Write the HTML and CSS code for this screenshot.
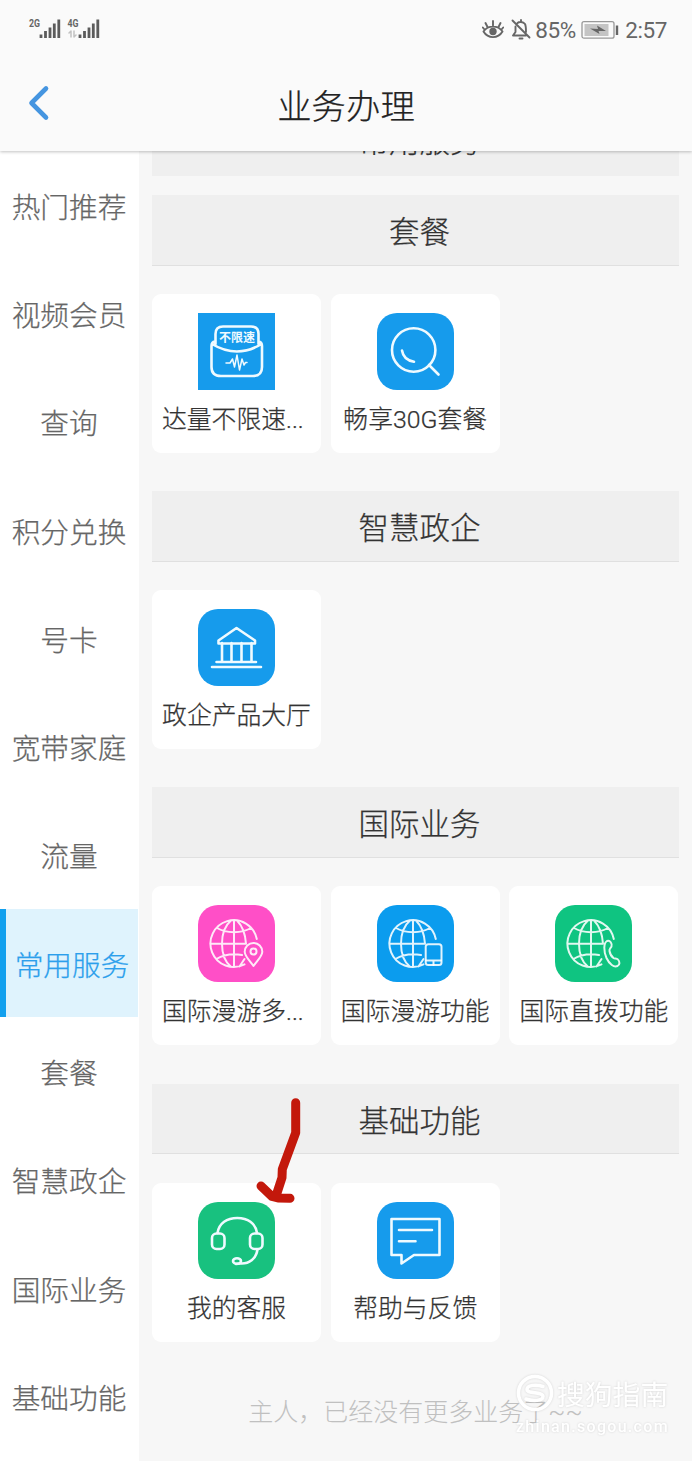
FILE: index.html
```
<!DOCTYPE html>
<html lang="zh-CN">
<head>
<meta charset="utf-8">
<title>业务办理</title>
<link rel="stylesheet" href="styles.css">
</head>
<body>
<svg class="defs" width="0" height="0">
  <symbol id="globe" viewBox="0 0 77 77">
    <path d="M58.8 34A23.4 23.4 0 1 0 46.5 59.4M36 15.3V62M12.6 38.7H48M33 15.5C26.500 21 24 29 24 38.7S26.500 56.500 33 61.8M39 15.5C44.500 21 47.3 29 48 38.7M46.5 54L41.5 61.5M19 23C28 28.500 44 28.500 53 23M18.500 54C26 49.500 35 48.500 44 50"/>
  </symbol>
</svg>
<div class="screen">
  <header class="top">
    <div class="status">
      <div class="signals">
        <svg width="74" height="24" viewBox="0 0 74 24">
          <g class="bars"><path d="M13 17.500v3.500M17.500 14v7M22 10.500v10.500M26.300 6.500v14.500M30.800 2.500v18.500M52 17.500v3.500M56.500 14v7M61 10.500v10.500M65.300 6.500v14.500M69.800 2.500v18.500"/></g>
          <path class="data" d="M43 20v-6l-2 2M46 14v6l2-2"/>
          <text x="1" y="10" textLength="11" lengthAdjust="spacingAndGlyphs">2G</text>
          <text x="39.500" y="10" textLength="11" lengthAdjust="spacingAndGlyphs">4G</text>
        </svg>
      </div>
      <div class="indicators">
        <svg class="eye" width="22" height="20" viewBox="0 0 22 20">
          <path d="M1.500 11.500C6 5 16 5 20.500 11.500C16 19 6 19 1.500 11.500ZM11 5.500V1M5.500 7L3.500 3M16.500 7L18.500 3M2.500 9.500L.8 7.500M19.500 9.500L21.200 7.500"/><circle cx="11" cy="11.500" r="3.700"/>
        </svg>
        <svg class="bell" width="20" height="21" viewBox="0 0 20 21">
          <path d="M4.500 7.500V13L2 16.500H15M6.500 4C8 2.500 12 2.500 14 5C15 7 15 10 15 13M10 3V1M1.500 1.500L18.500 18.500M8.500 19.500H11.500"/>
        </svg>
        <span class="percent">85%</span>
        <svg class="battery" width="38" height="20" viewBox="0 0 38 20">
          <rect class="shell" x="1" y="1.700" width="32" height="16.500" rx="2"/><rect class="level" x="3.500" y="4" width="24" height="12"/><path class="bolt" d="M9 8.500L17 9L16 5.500L25 11L17.500 11L18.500 14Z"/><rect class="cap" x="34.800" y="5.500" width="2.400" height="9.500"/>
        </svg>
        <span class="clock">2:57</span>
      </div>
    </div>
    <div class="titlebar">
      <svg class="back" width="22" height="36" viewBox="0 0 22 36"><path d="M18 3.500L3.500 18L18 32.500"/></svg>
      <h1>业务办理</h1>
    </div>
  </header>
  <div class="body">
    <nav class="side">
      <a>热门推荐</a><a>视频会员</a><a>查询</a><a>积分兑换</a><a>号卡</a><a>宽带家庭</a><a>流量</a><a class="active">常用服务</a><a>套餐</a><a>智慧政企</a><a>国际业务</a><a>基础功能</a>
    </nav>
    <main class="content">
      <h2 class="previous">常用服务</h2>
      <section>
        <h2>套餐</h2>
        <div class="cards">
          <div class="card">
            <svg class="icon square blue" viewBox="0 0 77 77"><path d="M17.500 31V21Q17.500 13.500 25 13.500H53Q60.500 13.500 60.500 21V31M17 28.500Q13.500 29 13.500 33V54Q13.500 63 23 63H55Q64 63 64 54V33Q64 29 60.500 28.500M14 31Q39 46 63.500 31"/><path class="thin" d="M28 50H32L34.500 46L36.500 54L39 42L41.500 57L44 46L46 52L47.500 49.500H49"/><text x="39" y="29" text-anchor="middle">不限速</text></svg>
            <span class="clipped">达量不限速...</span>
          </div>
          <div class="card">
            <svg class="icon blue" viewBox="0 0 77 77"><circle cx="36.700" cy="37" r="21.700"/><path d="M52 52L61.500 61.500M25 37.500Q26.500 47 37 48.700"/></svg>
            <span>畅享30G套餐</span>
          </div>
        </div>
      </section>
      <section>
        <h2>智慧政企</h2>
        <div class="cards">
          <div class="card">
            <svg class="icon blue" viewBox="0 0 77 77"><path d="M14 58H63M18.500 53H58M24 34V53M33.500 34V53M43.500 34V53M53.500 34V53M20.500 34.500H57V31.500L38.500 19L20.500 31.500Z"/></svg>
            <span>政企产品大厅</span>
          </div>
        </div>
      </section>
      <section>
        <h2>国际业务</h2>
        <div class="cards">
          <div class="card">
            <svg class="icon pink world" viewBox="0 0 77 77"><use href="#globe"/><path class="knock" d="M55.500 61C52 56 46.700 51 46.700 46.700A8.800 8.800 0 0 1 64.300 46.700C64.300 51 59 56 55.500 61Z"/><circle cx="55.500" cy="46.500" r="3"/></svg>
            <span class="clipped">国际漫游多...</span>
          </div>
          <div class="card">
            <svg class="icon sky world" viewBox="0 0 77 77"><use href="#globe"/><rect x="48.700" y="39.300" width="15.800" height="20.700" rx="2.500"/><path d="M49 55.500H64M56.500 56V60"/></svg>
            <span>国际漫游功能</span>
          </div>
          <div class="card">
            <svg class="icon jade world" viewBox="0 0 77 77"><use href="#globe"/><path d="M52 36C55 34.500 57.500 39 56.500 41.500C55.500 43.500 54 44 54.500 46C55 49 56.500 51.500 58.500 53C60 54 61.500 52.500 63 54.500C65 57 65 59.500 62.500 61C59 62.500 54.500 59.500 51.500 53C48.500 46 48.500 38 52 36Z"/></svg>
            <span>国际直拨功能</span>
          </div>
        </div>
      </section>
      <section>
        <h2>基础功能</h2>
        <div class="cards">
          <div class="card">
            <svg class="icon green" viewBox="0 0 77 77"><path d="M19.500 31C21 21 29 16 39.300 16S57.500 21 59 31M59.500 47.500C58 57 51 62 42.500 61.500L38 62"/><rect x="14" y="31.500" width="12.500" height="15.500" rx="4.500"/><rect x="52" y="31.500" width="12.500" height="15.500" rx="4.500"/><ellipse cx="39" cy="59" rx="4" ry="2.800"/></svg>
            <span>我的客服</span>
            <svg class="arrow" width="50" height="110" viewBox="0 0 50 110"><path d="M40.700 6.700V36.700L27.300 73.300L27 81.700L21 100M6 90L17 100.500L23 102L35 102.300"/></svg>
          </div>
          <div class="card">
            <svg class="icon blue" viewBox="0 0 77 77"><path d="M14.500 17H62.500V53H37L24.500 61.500V53H14.500ZM22 28H55M22 39.300H38.500"/></svg>
            <span>帮助与反馈</span>
          </div>
        </div>
      </section>
      <p class="end">主人，已经没有更多业务了~~</p>
    </main>
  </div>
  <div class="watermark">
    <div class="brand"><svg width="38" height="38" viewBox="0 0 38 38"><circle cx="19" cy="19" r="16.500"/><path d="M27 12.500C20 10 11 11 11 15.500C11 20 27 17.500 27 22.500C27 27 17 27.500 10 25"/></svg><span>搜狗指南</span></div>
    <div class="site">zhinan.sogou.com</div>
  </div>
</div>
</body>
</html>
```
FILE: styles.css
```
* { box-sizing: border-box; }
body { margin: 0; background: #f7f7f7; font-family: "Noto Sans CJK SC", sans-serif; font-weight: 300; }
h1, h2, p { margin: 0; font-weight: 300; }
h1, h2, .side a, .card > span { -webkit-text-stroke: .25px currentColor; }
svg { display: block; fill: none; stroke-linecap: round; stroke-linejoin: round; }
.defs { position: absolute; }
.screen { position: relative; width: 692px; height: 1461px; overflow: hidden; display: flex; flex-direction: column; }

.top { position: relative; height: 151px; flex: none; background: #fafafa; box-shadow: 0 1px 3px rgba(0,0,0,.24); }
.status { height: 59px; padding: 0 25px 0 28px; display: flex; justify-content: space-between; align-items: center; }
.signals { margin-top: -2px; }
.signals text { font: 700 11.500px Roboto, sans-serif; fill: #666; }
.signals svg { margin-top: 1px; }
.bars { stroke: #5c5c5c; stroke-width: 2.800; stroke-linecap: butt; }
.data { stroke: #c2c2c2; stroke-width: 1.500; }
.indicators { display: flex; align-items: center; font: 400 22.500px Roboto, sans-serif; color: #666; }
.eye, .bell { stroke: #666; stroke-width: 1.900; }
.eye circle { fill: #666; stroke: none; }
.bell { margin: 0 4px 0 7px; }
.percent { width: 41px; white-space: nowrap; letter-spacing: -.4px; }
.clock { letter-spacing: -.4px; }
.battery { margin: 0 6px 0 5px; }
.shell { stroke: #999; stroke-width: 1.300; }
.level { fill: #c4c4c4; }
.bolt, .cap { fill: #666; }
.titlebar { height: 92px; display: flex; align-items: center; padding: 0 27px; }
.back { stroke: #4595e0; stroke-width: 4.600; margin: -4px 0 0 1px; }
h1 { flex: 1; margin: -2px 23px 0 0; text-align: center; font-size: 34.400px; line-height: 50px; color: #222; }

.body { flex: 1; min-height: 0; display: flex; }
.side { width: 139px; flex: none; padding-right: 1px; background: #fff; }
.side a { display: flex; height: 108.300px; padding-top: 1px; align-items: center; justify-content: center; font-size: 28.700px; line-height: 40px; color: #666; }
.side .active { background: #dff3fd; border-left: 6px solid #12a0ee; color: #2c9fec; }
.content { flex: 1; min-width: 0; padding: 0 13px; overflow: hidden; }
h2 { height: 70.500px; line-height: 70px; background: #efefef; border-bottom: 1.500px solid #e0e0e0; text-align: center; font-size: 30.500px; color: #333; padding-left: 8px; }
.previous { margin: -45.500px 0 19px; line-height: 66px; border-bottom: 0; }
section { height: 296.200px; }
.cards { display: grid; grid-template-columns: repeat(3, 169px); gap: 9.700px; padding-top: 28.500px; }
.card { position: relative; height: 159px; padding-top: 19px; display: flex; flex-direction: column; align-items: center; background: #fff; border-radius: 9px; }
.card > span { align-self: flex-start; min-width: 149px; margin: 12px 0 0 10px; text-align: center; font-family: Roboto, "Noto Sans CJK SC", sans-serif; font-size: 24.800px; line-height: 36px; color: #333; white-space: nowrap; }
.card > .clipped { text-align: left; }
.icon { width: 77px; height: 77px; border-radius: 20px; stroke: #effaff; stroke-width: 2.600; }
.square { border-radius: 0; }
.blue { background: #169bec; }
.sky { background: #0b9cee; }
.pink { background: #ff4fc7; }
.jade { background: #0fc481; }
.green { background: #18c17f; }
.world { stroke-width: 2; stroke: rgba(255,255,255,.88); }
.knock { fill: #ff4fc7; }
.icon .thin { stroke-width: 1.500; }
.icon text { font-size: 12px; font-weight: 700; fill: #effaff; stroke: none; }
.arrow { position: absolute; left: 103px; top: -87px; z-index: 2; stroke: #c3180b; stroke-width: 9; }
.end { padding: 15px 0 0; text-align: center; font: 300 25px/36px Roboto, "Noto Sans CJK SC", sans-serif; color: #c0c0c0; white-space: nowrap; }

.watermark { position: absolute; left: 516px; top: 1374px; width: 156px; color: #fff; filter: drop-shadow(0 0 1px rgba(0,0,0,.14)); }
.brand { display: flex; align-items: center; gap: 3px; height: 38px; font-size: 27.800px; font-weight: 400; white-space: nowrap; }
.brand svg { flex: none; stroke: #fff; stroke-width: 3.500; }
.site { font: 500 16px/24px Roboto, sans-serif; letter-spacing: 1.300px; margin-top: 3px; white-space: nowrap; }
```
